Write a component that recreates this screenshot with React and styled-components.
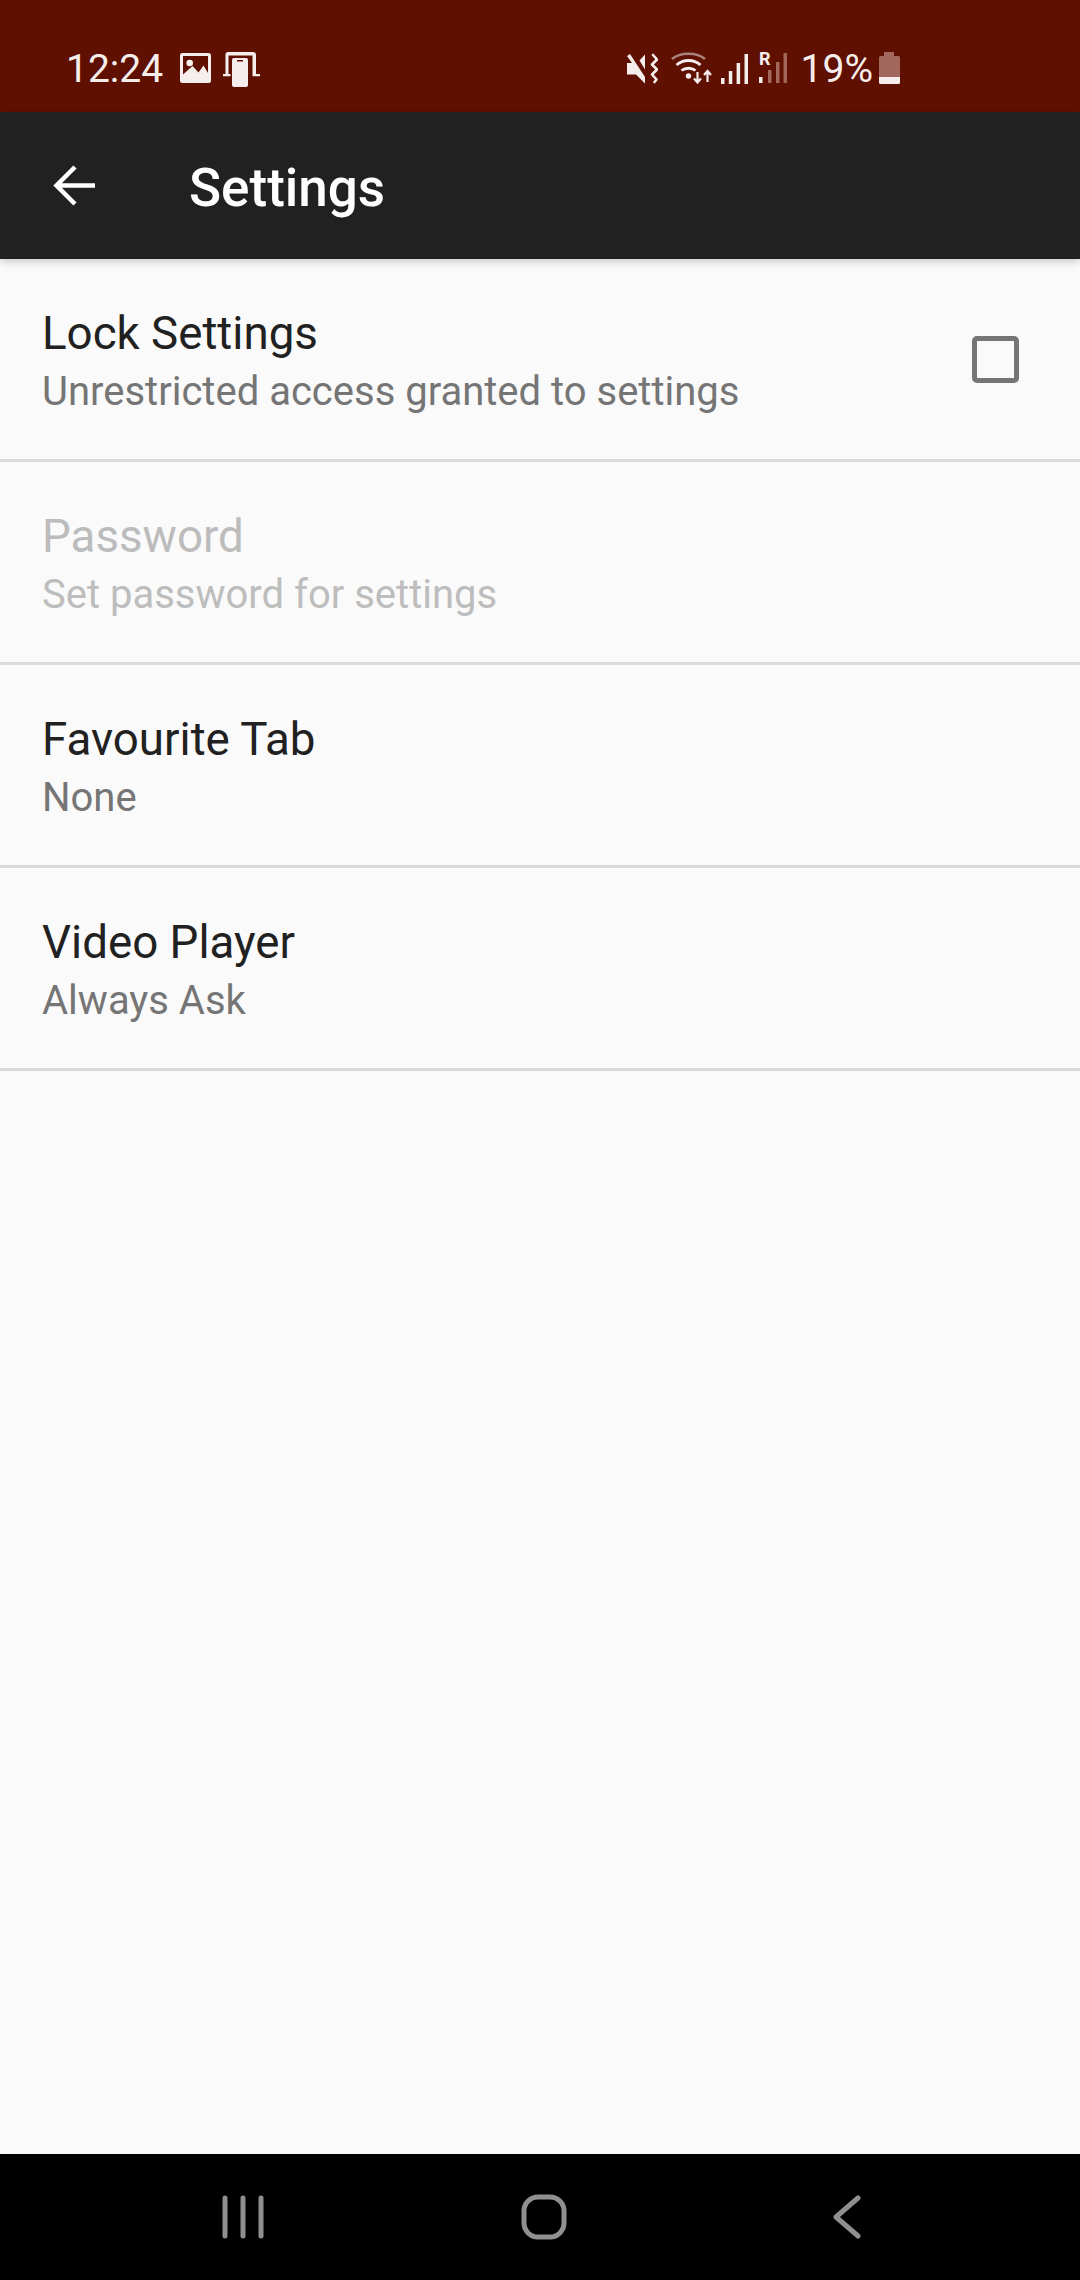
import React from 'react'
import styled, { createGlobalStyle } from 'styled-components'

const GlobalStyle = createGlobalStyle`
  html, body {
    margin: 0;
    padding: 0;
    background: #fafafa;
    font-family: Roboto, "Noto Sans", sans-serif;
  }
`

const Screen = styled.div`
  width: 1080px;
  height: 2280px;
  display: flex;
  flex-direction: column;
  background: #fafafa;
  overflow: hidden;
`

const StatusBar = styled.div`
  height: 112px;
  flex: none;
  box-sizing: border-box;
  display: flex;
  align-items: flex-start;
  justify-content: space-between;
  padding: 52px 180px 0 66px;
  background: #5f1000;
  color: #f6eeec;
  font-size: 39px;
  line-height: 31px;
`

const StatusGroup = styled.div`
  display: flex;
  align-items: flex-start;
`

const StatusSlot = styled.div`
  display: flex;
  margin-left: ${p => p.$left || 0}px;
  margin-top: ${p => p.$top || 0}px;
`

const AppBar = styled.div`
  height: 147px;
  flex: none;
  display: flex;
  align-items: center;
  background: #212121;
  color: #fff;
  position: relative;
  z-index: 1;
  box-shadow: 0 3px 8px rgba(0, 0, 0, 0.18);
`

const BackButton = styled.div`
  width: 189px;
  flex: none;
  display: flex;
  padding-left: 53px;
  box-sizing: border-box;
`

const Title = styled.div`
  font-size: 53px;
  font-weight: 500;
  padding-top: 5px;
`

const List = styled.div`
  flex: 1;
  display: flex;
  flex-direction: column;
`

const Row = styled.div`
  height: 203px;
  flex: none;
  box-sizing: border-box;
  display: flex;
  align-items: center;
  justify-content: space-between;
  padding: 6px 42px 0;
  border-bottom: 3px solid #dadada;
`

const RowText = styled.div`
  display: flex;
  flex-direction: column;
  gap: 6px;
`

const RowTitle = styled.div`
  font-size: 45.7px;
  line-height: 54px;
  color: ${p => (p.$disabled ? '#bcbcbc' : '#212121')};
`

const RowSummary = styled.div`
  font-size: 40px;
  line-height: 50px;
  color: ${p => (p.$disabled ? '#bdbdbd' : '#757575')};
`

const CheckBox = styled.div`
  width: 47px;
  height: 47px;
  box-sizing: border-box;
  margin: 0 19px 6px 0;
  border: 5px solid #757575;
  border-radius: 5px;
`

const NavBar = styled.div`
  height: 126px;
  flex: none;
  display: grid;
  grid-template-columns: 222px 42px 256px 48px 265px 28px;
  align-items: center;
  background: #000;
`

const NavSlot = styled.div`
  grid-column: ${p => p.$col};
  display: flex;
  justify-content: center;
`

const ImageIcon = () => (
  <svg width="31" height="30" viewBox="0 0 31 30">
    <path fill="#f6eeec" fillRule="evenodd" d="M2.5 0h26A2.5 2.5 0 0 1 31 2.5v25a2.5 2.5 0 0 1-2.5 2.5h-26A2.5 2.5 0 0 1 0 27.500v-25A2.500 2.500 0 0 1 2.500 0zM3 3v18.500L12.500 13l6 6.500 5-7L28 20V3z" />
    <circle cx="9.700" cy="10" r="3.300" fill="#f6eeec" />
  </svg>
)

const CastIcon = () => (
  <svg width="37" height="35" viewBox="0 0 37 35">
    <path fill="#f6eeec" d="M5 0h25a3 3 0 0 1 3 3v19h-3.500V3.500h-24V22H2.500V2.500A2.500 2.500 0 0 1 5 0zM0 22h7.500v2.200H0zM29.500 22H37v2.200h-7.500z" />
    <path fill="#f6eeec" fillRule="evenodd" d="M11 6h12a2 2 0 0 1 2 2v25a2 2 0 0 1-2 2H11a2 2 0 0 1-2-2V8a2 2 0 0 1 2-2zM14 8v1.500h6V8z" />
  </svg>
)

const MuteIcon = () => (
  <svg width="31" height="31" viewBox="0 0 31 31">
    <path fill="#f6eeec" d="M12.500 7.500L18 1.500v15zM0 3l3-2 15 23v6.500L9 21.500H0V10h5z" />
    <path fill="none" stroke="#f6eeec" strokeWidth="2.600" strokeLinejoin="round" strokeLinecap="round" d="M26 2l4 4.500-5 5 5 5-5 5 4.500 5-2 2.500" />
  </svg>
)

const WifiIcon = () => (
  <svg width="42" height="32" viewBox="0 0 42 32">
    <path fill="none" stroke="#a9827a" strokeWidth="2.600" d="M1 7C9 0 26 0 34 7" />
    <path fill="none" stroke="#f6eeec" strokeWidth="2.800" d="M5.500 13c7-6 17-6 24 0M10.500 18.500c4-3 10-3 14 0" />
    <circle cx="17.500" cy="24" r="2.700" fill="#f6eeec" />
    <path fill="none" stroke="#f6eeec" strokeWidth="2.200" d="M26.500 20v11M23 26.500l3.500 4 3.500-4M36.500 30V19M33 23l3.500-4 3.500 4" />
  </svg>
)

const Signal = ({ dim, roam }) => (
  <svg width={roam ? 28 : 27} height="32" viewBox={`0 0 ${roam ? 28 : 27} 32`}>
    {roam && <text x="0" y="13" fontFamily="Roboto" fontWeight="700" fontSize="18" fill="#f6eeec">R</text>}
    <rect x="0" y="25" width="3.500" height="6" fill="#f6eeec" />
    <rect x={roam ? 9 : 7.800} y="18" width="3.500" height="13" fill={dim ? '#a2675d' : '#f6eeec'} />
    <rect x={roam ? 17 : 15.600} y="10" width="3.500" height="21" fill={dim ? '#a2675d' : '#f6eeec'} />
    <rect x={roam ? 24.500 : 23.500} y="1" width="3.500" height="30" fill={dim ? '#a2675d' : '#f6eeec'} />
  </svg>
)

const BatteryIcon = () => (
  <svg width="21" height="32" viewBox="0 0 21 32">
    <path fill="#a2675d" d="M5 0h10v4h4.500a1.500 1.500 0 0 1 1.500 1.500V25H0V5.500A1.500 1.500 0 0 1 1.500 4H5z" />
    <path fill="#f6eeec" d="M0 25h21v5.500a1.500 1.500 0 0 1-1.500 1.500h-18A1.500 1.500 0 0 1 0 30.500z" />
  </svg>
)

const BackArrow = () => (
  <svg width="42" height="41" viewBox="0 0 42 41">
    <path fill="none" stroke="#fff" strokeWidth="4.500" d="M42 20.500H3.500M22 2L3.500 20.500 22 39" />
  </svg>
)

const RecentsIcon = () => (
  <svg width="42" height="44" viewBox="0 0 42 44">
    <path stroke="#8f8f8f" strokeWidth="5" strokeLinecap="round" d="M3 3v38M21 3v38M39 3v38" />
  </svg>
)

const HomeIcon = () => (
  <svg width="46" height="46" viewBox="0 0 46 46">
    <rect x="3" y="3" width="40" height="40" rx="14" fill="none" stroke="#8f8f8f" strokeWidth="5" />
  </svg>
)

const NavBackIcon = () => (
  <svg width="28" height="44" viewBox="0 0 28 44">
    <path fill="none" stroke="#8f8f8f" strokeWidth="5" strokeLinecap="round" strokeLinejoin="round" d="M25 3L3 22l22 19" />
  </svg>
)

const rows = [
  { title: 'Lock Settings', summary: 'Unrestricted access granted to settings', checkbox: true },
  { title: 'Password', summary: 'Set password for settings', disabled: true },
  { title: 'Favourite Tab', summary: 'None' },
  { title: 'Video Player', summary: 'Always Ask' }
]

export default function App() {
  return (
    <Screen>
      <GlobalStyle />
      <StatusBar>
        <StatusGroup>
          <StatusSlot $top={2}>12:24</StatusSlot>
          <StatusSlot $left={17} $top={1}><ImageIcon /></StatusSlot>
          <StatusSlot $left={12}><CastIcon /></StatusSlot>
        </StatusGroup>
        <StatusGroup>
          <StatusSlot $top={1}><MuteIcon /></StatusSlot>
          <StatusSlot $left={13}><WifiIcon /></StatusSlot>
          <StatusSlot $left={8} $top={1}><Signal /></StatusSlot>
          <StatusSlot $left={11}><Signal dim roam /></StatusSlot>
          <StatusSlot $left={14} $top={2}>19%</StatusSlot>
          <StatusSlot $left={6}><BatteryIcon /></StatusSlot>
        </StatusGroup>
      </StatusBar>
      <AppBar>
        <BackButton><BackArrow /></BackButton>
        <Title>Settings</Title>
      </AppBar>
      <List>
        {rows.map(row => (
          <Row key={row.title}>
            <RowText>
              <RowTitle $disabled={row.disabled}>{row.title}</RowTitle>
              <RowSummary $disabled={row.disabled}>{row.summary}</RowSummary>
            </RowText>
            {row.checkbox && <CheckBox />}
          </Row>
        ))}
      </List>
      <NavBar>
        <NavSlot $col={2}><RecentsIcon /></NavSlot>
        <NavSlot $col={4}><HomeIcon /></NavSlot>
        <NavSlot $col={6}><NavBackIcon /></NavSlot>
      </NavBar>
    </Screen>
  )
}
